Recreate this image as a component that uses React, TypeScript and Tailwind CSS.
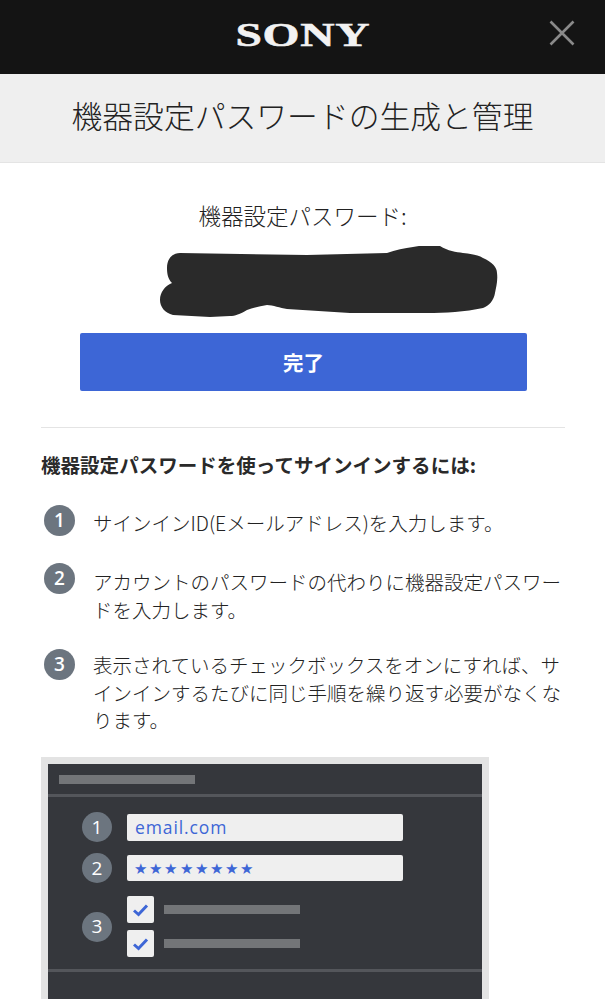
const jp = "font-['Noto_Sans_CJK_JP','Noto_Sans',sans-serif]";

const StepBadge = ({ n }: { n: number }) => (
  <div className="flex h-[31px] w-[31px] shrink-0 items-center justify-center rounded-full bg-[#6c757f] font-['Open_Sans',sans-serif] text-[19px] font-semibold text-white">
    {n}
  </div>
);

const Step = ({ n, children, className, textClass }: { n: number; children: React.ReactNode; className: string; textClass: string }) => (
  <div className={`flex gap-[18px] pl-[44px] pr-[40px] ${className}`}>
    <StepBadge n={n} />
    <p className={`text-[19.5px] font-light leading-[27.5px] text-[#222] ${textClass}`}>{children}</p>
  </div>
);

const MiniBadge = ({ n }: { n: number }) => (
  <div className="flex h-[30px] w-[30px] shrink-0 items-center justify-center rounded-full bg-[#6c757f] font-['Open_Sans',sans-serif] text-[19px] text-white">
    {n}
  </div>
);

const MiniCheck = () => (
  <div className="flex items-center gap-[10px]">
    <div className="flex h-[27px] w-[27px] items-center justify-center rounded-[2px] bg-[#efefef]">
      <svg width="17" height="14" viewBox="0 0 17 14" fill="none">
        <path d="M2 7.5 L6.5 11.5 L15 2.5" stroke="#3d66d6" strokeWidth="3" />
      </svg>
    </div>
    <div className="h-[9px] w-[136px] bg-[#737578]" />
  </div>
);

export default function App() {
  return (
    <div className={`h-[999px] w-[605px] overflow-hidden bg-white ${jp}`}>
      <header className="relative flex h-[74px] items-center justify-center bg-[#141414] pb-[3px]">
        <span className="origin-center scale-x-[1.44] font-['Liberation_Serif',serif] text-[33px] font-bold leading-none tracking-[0.5px] text-[#f2f2f2] [-webkit-text-stroke:0.5px_#f2f2f2]">
          SONY
        </span>
        <svg className="absolute left-[549px] top-[20px]" width="26" height="26" viewBox="0 0 26 26" fill="none">
          <path d="M1.5 1.5 L24.5 24.5 M24.5 1.5 L1.5 24.5" stroke="#8a8a8a" strokeWidth="2.6" />
        </svg>
      </header>

      <div className="flex h-[89px] items-center justify-center border-b border-[#e4e4e4] bg-[#efefef] pb-[5px]">
        <h1 className="text-[30.8px] font-light leading-none text-[#222]">機器設定パスワードの生成と管理</h1>
      </div>

      <p className="pt-[39px] text-center text-[22.5px] font-light leading-[26px] text-[#222]">機器設定パスワード:</p>

      <svg className="mt-[18px] block" width="605" height="72" viewBox="0 0 605 72">
        <path
          d="M167 22 C167 12 173 7 180 7 L307 9 L387 7 C395 4 405 2 413 1 C422 -1 434 -1 440 0 C448 5 456 6 463 7 C472 8 478 9 483 12 C492 16 497 21 497 27 C498 35 496 41 495 47 C494 54 489 60 483 62 C465 66 445 67 427 67 L350 67 L287 63 C280 62 273 59 267 59 C260 60 253 62 247 64 C240 68 235 70 230 70 L210 71 L173 69 C165 67 160 61 160 54 C160 46 165 40 172 37 C168 33 167 28 167 22 Z"
          fill="#2a2a2a"
        />
      </svg>

      <div className="mt-[15px] px-[80px]">
        <button className="flex h-[58px] w-[447px] items-center justify-center rounded-[2px] bg-[#3d66d6] text-[20.5px] font-bold text-white">
          完了
        </button>
      </div>

      <div className="ml-[41px] mr-[40px] mt-[36px] border-t border-[#e4e4e4]" />

      <p className="pl-[41px] pt-[23px] text-[19.55px] font-bold leading-[27px] text-[#2a2a2a]">
        機器設定パスワードを使ってサインインするには:
      </p>

      <Step n={1} className="mt-[27px]" textClass="pt-[4px]">サインインID(Eメールアドレス)を入力します。</Step>
      <Step n={2} className="mt-[26.5px]" textClass="pt-[5px]">アカウントのパスワードの代わりに機器設定パスワードを入力します。</Step>
      <Step n={3} className="mt-[26px]" textClass="pt-[2px]">表示されているチェックボックスをオンにすれば、サインインするたびに同じ手順を繰り返す必要がなくなります。</Step>

      <div className="ml-[41px] mt-[23.5px] h-[300px] w-[448px] border-[7px] border-[#e3e3e3] border-b-0 bg-[#35373c]">
        <div className="h-[33px] border-b-[3px] border-[#54565b] pl-[11px] pt-[11px]">
          <div className="h-[9px] w-[136px] bg-[#737578]" />
        </div>
        <div className="flex flex-col pl-[34px] pt-[15px]">
          <div className="flex items-center gap-[15px]">
            <MiniBadge n={1} />
            <div className="flex h-[27px] w-[276px] items-center rounded-[2px] bg-[#efefef] pl-[8px] font-['Open_Sans',sans-serif] text-[17.5px] tracking-[0.9px] text-[#3d66d6]">
              email.com
            </div>
          </div>
          <div className="mt-[11px] flex items-center gap-[15px]">
            <MiniBadge n={2} />
            <div className="flex h-[26px] w-[276px] items-center rounded-[2px] bg-[#efefef] pl-[7px] font-['Open_Sans',sans-serif] text-[15px] tracking-[2.2px] text-[#3d66d6]">
              ★★★★★★★★
            </div>
          </div>
          <div className="mt-[13px] flex items-center gap-[15px]">
            <MiniBadge n={3} />
            <div className="flex flex-col gap-[7px]">
              <MiniCheck />
              <MiniCheck />
            </div>
          </div>
        </div>
        <div className="mt-[12px] border-b-[3px] border-[#54565b]" />
      </div>
    </div>
  );
}
